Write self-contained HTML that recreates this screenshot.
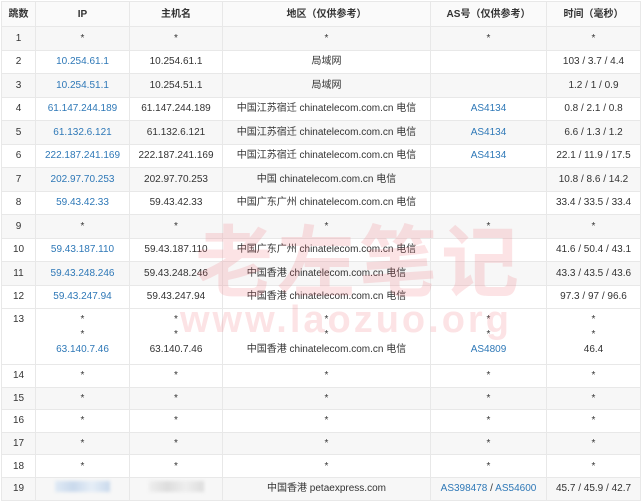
<!DOCTYPE html>
<html><head><meta charset="utf-8"><style>
body{margin:0;background:#fff;width:644px;height:501px;overflow:hidden;position:relative;font-family:"Liberation Sans","Noto Sans CJK SC",sans-serif;font-size:10px;color:#333}
table{position:absolute;left:1px;top:1px;width:640px;border-collapse:collapse;table-layout:fixed}
td,th{border:1px solid #e8e8e8;text-align:center;padding:0;line-height:13px}
th{height:24px;font-weight:bold;background:#fafafa;color:#333}
td{height:22.5px}
tr.g td{background:#f7f7f7}
a{color:#2e78b7;text-decoration:none}
.r13 td{height:52px;vertical-align:top;padding-top:3px;line-height:15px}
.t td{height:21.6px}
.wm{position:absolute;color:rgba(235,90,100,.17);font-weight:bold;white-space:nowrap}
.blur{display:inline-block;width:55px;height:11px;background:linear-gradient(90deg,#e0eaf5,#c9d9ec,#e6eef7,#c9d9ec);filter:blur(1.5px)}
</style></head><body>
<table>
<colgroup><col style="width:34px"><col style="width:94px"><col style="width:93px"><col style="width:208px"><col style="width:116px"><col></colgroup>
<tr><th>跳数</th><th>IP</th><th>主机名</th><th>地区（仅供参考）</th><th>AS号（仅供参考）</th><th>时间（毫秒）</th></tr>
<tr class="g"><td>1</td><td>*</td><td>*</td><td>*</td><td>*</td><td>*</td></tr>
<tr><td>2</td><td><a>10.254.61.1</a></td><td>10.254.61.1</td><td>局域网</td><td></td><td>103 / 3.7 / 4.4</td></tr>
<tr class="g"><td>3</td><td><a>10.254.51.1</a></td><td>10.254.51.1</td><td>局域网</td><td></td><td>1.2 / 1 / 0.9</td></tr>
<tr><td>4</td><td><a>61.147.244.189</a></td><td>61.147.244.189</td><td>中国江苏宿迁 chinatelecom.com.cn 电信</td><td><a>AS4134</a></td><td>0.8 / 2.1 / 0.8</td></tr>
<tr class="g"><td>5</td><td><a>61.132.6.121</a></td><td>61.132.6.121</td><td>中国江苏宿迁 chinatelecom.com.cn 电信</td><td><a>AS4134</a></td><td>6.6 / 1.3 / 1.2</td></tr>
<tr><td>6</td><td><a>222.187.241.169</a></td><td>222.187.241.169</td><td>中国江苏宿迁 chinatelecom.com.cn 电信</td><td><a>AS4134</a></td><td>22.1 / 11.9 / 17.5</td></tr>
<tr class="g"><td>7</td><td><a>202.97.70.253</a></td><td>202.97.70.253</td><td>中国 chinatelecom.com.cn 电信</td><td></td><td>10.8 / 8.6 / 14.2</td></tr>
<tr><td>8</td><td><a>59.43.42.33</a></td><td>59.43.42.33</td><td>中国广东广州 chinatelecom.com.cn 电信</td><td></td><td>33.4 / 33.5 / 33.4</td></tr>
<tr class="g"><td>9</td><td>*</td><td>*</td><td>*</td><td>*</td><td>*</td></tr>
<tr><td>10</td><td><a>59.43.187.110</a></td><td>59.43.187.110</td><td>中国广东广州 chinatelecom.com.cn 电信</td><td></td><td>41.6 / 50.4 / 43.1</td></tr>
<tr class="g"><td>11</td><td><a>59.43.248.246</a></td><td>59.43.248.246</td><td>中国香港 chinatelecom.com.cn 电信</td><td></td><td>43.3 / 43.5 / 43.6</td></tr>
<tr><td>12</td><td><a>59.43.247.94</a></td><td>59.43.247.94</td><td>中国香港 chinatelecom.com.cn 电信</td><td></td><td>97.3 / 97 / 96.6</td></tr>
<tr class="r13"><td>13</td><td>*<br>*<br><a>63.140.7.46</a></td><td>*<br>*<br>63.140.7.46</td><td>*<br>*<br>中国香港 chinatelecom.com.cn 电信</td><td>*<br>*<br><a>AS4809</a></td><td>*<br>*<br>46.4</td></tr>
<tr class="t"><td>14</td><td>*</td><td>*</td><td>*</td><td>*</td><td>*</td></tr>
<tr class="g t"><td>15</td><td>*</td><td>*</td><td>*</td><td>*</td><td>*</td></tr>
<tr class="t"><td>16</td><td>*</td><td>*</td><td>*</td><td>*</td><td>*</td></tr>
<tr class="g t"><td>17</td><td>*</td><td>*</td><td>*</td><td>*</td><td>*</td></tr>
<tr class="t"><td>18</td><td>*</td><td>*</td><td>*</td><td>*</td><td>*</td></tr>
<tr class="g t"><td>19</td><td><span class="blur"></span></td><td><span class="blur" style="background:linear-gradient(90deg,#eee,#ddd,#eee,#ddd)"></span></td><td>中国香港 petaexpress.com</td><td><a>AS398478</a> / <a>AS54600</a></td><td>45.7 / 45.9 / 42.7</td></tr>
</table>
<div class="wm" style="left:195px;top:212px;font-size:78px;letter-spacing:4px;font-family:'Noto Sans CJK SC',sans-serif;line-height:90px">老左笔记</div>
<div class="wm" style="left:180px;top:298px;font-size:38px;letter-spacing:3px;line-height:44px">www.laozuo.org</div>
</body></html>
